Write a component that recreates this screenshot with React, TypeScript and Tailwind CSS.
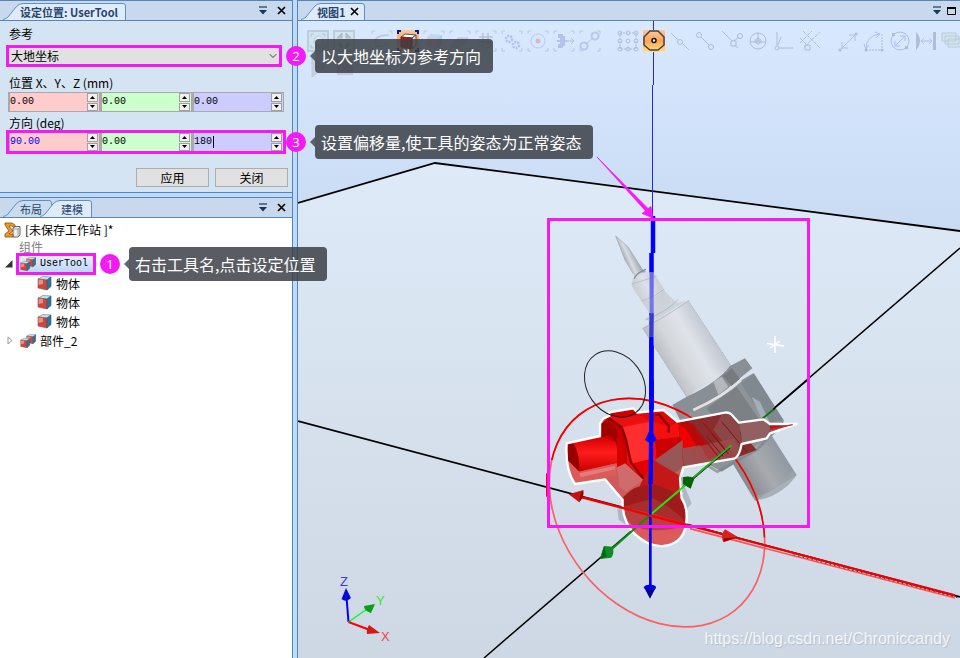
import { useState, type ReactNode } from 'react';
import { ChevronDown } from 'lucide-react';
import clsx from 'clsx';

// ---------------------------------------------------------------------------
// Shared bits: panel header, tabs, callouts
// ---------------------------------------------------------------------------

function Tab({
  width,
  active,
  bold,
  children,
}: {
  width: number;
  active?: boolean;
  bold?: boolean;
  children: ReactNode;
}) {
  return (
    <div className="relative -mr-3 h-[17px]" style={{ width }}>
      <svg className="absolute inset-0 h-full w-full" viewBox={`0 0 ${width} 17`}>
        <path
          d={`M0 16.5 Q3 16 5 14 L13 4 Q16 .5 20 .5 H${width - 3} Q${width - 0.5} .5 ${width - 0.5} 3 V17 H0Z`}
          fill={active ? '#dfebf8' : '#cbdcee'}
        />
        <path
          d={`M0 16.5 Q3 16 5 14 L13 4 Q16 .5 20 .5 H${width - 3} Q${width - 0.5} .5 ${width - 0.5} 3 V17`}
          fill="none"
          stroke="#5f8fc4"
        />
      </svg>
      <button
        type="button"
        className={clsx(
          'relative flex h-full items-center gap-1 pl-[17px] text-[11px] leading-4 whitespace-nowrap text-[#27456f]',
          bold && 'font-bold',
        )}
      >
        {children}
      </button>
    </div>
  );
}

function CloseGlyph() {
  return (
    <svg width="9" height="9" viewBox="0 0 9 9" aria-hidden="true">
      <path d="M1 1l7 7M8 1L1 8" stroke="#000" strokeWidth="1.7" />
    </svg>
  );
}

function MenuGlyph() {
  return (
    <svg width="8" height="9" viewBox="0 0 8 9" aria-hidden="true">
      <path d="M0 1h8" stroke="#1c3557" strokeWidth="1.2" />
      <path d="M0 4h8L4 8.500z" fill="#1c3557" />
    </svg>
  );
}

function PanelHeader({ children, maximize }: { children: ReactNode; maximize?: boolean }) {
  return (
    <header className="flex h-[21px] shrink-0 items-end border-y border-[#5585bb] bg-[#c8d9ed] pl-[3px]">
      {children}
      <div className={clsx('ml-auto flex h-full items-center gap-[10px]', maximize ? 'pr-1' : 'pr-[6px]')}>
        <button type="button" aria-label="菜单">
          <MenuGlyph />
        </button>
        <button type="button" aria-label={maximize ? '最大化' : '关闭面板'}>
          {maximize ? (
            <svg width="9" height="8" viewBox="0 0 9 8" className="-ml-1">
              <path d="M.5 1v6.500h8V1" fill="none" stroke="#000" />
              <path d="M0 1h9" stroke="#000" strokeWidth="2" />
            </svg>
          ) : (
            <CloseGlyph />
          )}
        </button>
      </div>
    </header>
  );
}

// Magenta frame with a numbered badge and a dark hint bubble on its right.
function Callout({ step, text, tight }: { step: number; text: string; tight?: boolean }) {
  return (
    <div className="pointer-events-none absolute -inset-[2px] z-20 border-3 border-[#f41af4]">
      <div
        className={clsx(
          'absolute top-1/2 left-full flex -translate-y-1/2 items-center',
          tight ? 'ml-[3px]' : 'ml-[7px]',
        )}
      >
        <span className="flex size-5 items-center justify-center rounded-full bg-[#f41af4] font-['Open_Sans',sans-serif] text-[13px] leading-5 text-white">
          {step}
        </span>
        <span className="ml-1 border-y-5 border-r-5 border-y-transparent border-r-[#3c424b]/80" />
        <span className="rounded-sm bg-[#3c4046]/85 py-1 pr-3 pl-[6px] font-['Noto_Sans_CJK_SC',sans-serif] text-base leading-[26px] whitespace-nowrap text-white">
          {text}
        </span>
      </div>
    </div>
  );
}

// ---------------------------------------------------------------------------
// Set position form
// ---------------------------------------------------------------------------

const AXIS_BG = ['bg-[#ffcccc]', 'bg-[#ccffcc]', 'bg-[#ccccff]'];
const AXES = ['X', 'Y', 'Z'];

function VectorInput({
  label,
  initial,
  edited,
  children,
}: {
  label: string;
  initial: string[];
  edited?: boolean;
  children?: ReactNode;
}) {
  const [values, setValues] = useState(initial);

  const update = (i: number, v: string) => setValues(values.map((old, j) => (j === i ? v : old)));
  const step = (i: number, d: number) => update(i, ((parseFloat(values[i]) || 0) + d).toFixed(2));

  return (
    <div className="relative mr-1 flex h-5">
      {values.map((value, i) => (
        <div
          key={AXES[i]}
          className={clsx('relative flex min-w-0 flex-1 border border-l-2 border-[#a9a9ad]', AXIS_BG[i])}
        >
          <input
            aria-label={`${label} ${AXES[i]}`}
            value={value}
            onChange={(e) => update(i, e.target.value)}
            className={clsx(
              'w-0 min-w-0 flex-1 bg-transparent font-["Liberation_Mono",monospace] text-[10px] outline-none',
              edited && i === 0 ? 'text-[#0000ff]' : 'text-black',
            )}
          />
          {edited && i === 2 && <span className="absolute top-[3px] left-[19px] h-3 w-px bg-black" />}
          <div className="flex w-3 shrink-0 flex-col gap-px pr-px">
            {[1, -1].map((d) => (
              <button
                key={d}
                type="button"
                aria-label={`${AXES[i]} ${d > 0 ? '+' : '-'}`}
                onClick={() => step(i, d)}
                className="flex flex-1 items-center justify-center border border-[#a0a0a0] bg-[#f0f0f0]"
              >
                <svg width="5" height="3" viewBox="0 0 5 3">
                  <path d={d > 0 ? 'M0 3h5L2.500 0z' : 'M0 0h5L2.500 3z'} />
                </svg>
              </button>
            ))}
          </div>
        </div>
      ))}
      {children}
    </div>
  );
}

function SetPositionPanel() {
  return (
    <section>
      <PanelHeader>
        <Tab width={123} active bold>
          设定位置: UserTool
        </Tab>
      </PanelHeader>
      <form
        className="border-b border-[#5585bb] bg-[#d5e4f2] pt-[5px] pr-1 pb-[5px] pl-2 text-xs leading-4"
        onSubmit={(e) => e.preventDefault()}
      >
        <label htmlFor="reference" className="block pl-px">
          参考
        </label>
        <div className="relative mt-[5px] mr-2 h-[18px]">
          <select id="reference" className="h-full w-full appearance-none bg-[#e1e1e1] pl-[3px] text-xs outline-none">
            <option>大地坐标</option>
            <option>本地</option>
          </select>
          <ChevronDown className="pointer-events-none absolute top-[3px] right-px size-3 text-[#444]" strokeWidth={2} />
          <Callout step={2} text="以大地坐标为参考方向" />
        </div>
        <p className="mt-[10px] mb-px pl-px">位置 X、Y、Z (mm)</p>
        <VectorInput label="位置" initial={['0.00', '0.00', '0.00']} />
        <p className="mt-[3px] mb-px pl-px">方向 (deg)</p>
        <VectorInput label="方向" initial={['90.00', '0.00', '180']} edited>
          <Callout step={3} text="设置偏移量,使工具的姿态为正常姿态" tight />
        </VectorInput>
        <div className="mt-4 flex justify-end gap-[6px]">
          <button type="submit" className="h-[19px] w-[73px] border border-[#adadad] bg-[#e1e1e1]">
            应用
          </button>
          <button type="button" className="h-[19px] w-[73px] border border-[#adadad] bg-[#e1e1e1]">
            关闭
          </button>
        </div>
      </form>
    </section>
  );
}

// ---------------------------------------------------------------------------
// Modeling tree
// ---------------------------------------------------------------------------

function Cube() {
  return (
    <>
      <path d="M1 3l5-2.500 8 .5-4 3z" fill="#c4e4f0" stroke="#507f9b" strokeWidth=".6" />
      <path d="M1 3l9 1v10l-9-2z" fill="#d0453c" stroke="#96494a" strokeWidth=".6" />
      <path d="M10 4l4-3v9.500l-4 3.500z" fill="#2f7397" stroke="#295d82" strokeWidth=".6" />
      <path d="M1.500 3.500l4.500.5v4L1.500 9z" fill="#f0b09e" opacity=".7" />
    </>
  );
}

function BodyIcon() {
  return (
    <svg width="15" height="15" viewBox="0 0 15 15" aria-hidden="true">
      <Cube />
    </svg>
  );
}

function ComponentIcon() {
  return (
    <svg width="16" height="14" viewBox="0 0 16 14" aria-hidden="true">
      <g transform="translate(6 0) scale(.7)">
        <Cube />
      </g>
      <g transform="translate(0 4) scale(.7)">
        <Cube />
      </g>
    </svg>
  );
}

function StationIcon() {
  return (
    <svg width="17" height="16" viewBox="0 0 17 16" aria-hidden="true">
      <path d="M9 6l2-1.500h5V13l-2 2H9z" fill="#eee" stroke="#666" />
      <path d="M9 7h5v7M14 7l2-2" fill="none" stroke="#888" strokeWidth=".8" />
      <path d="M1 1h7l3 2v2H9L8 4H5l4 5-4 3h4v3H1v-3l4-3-4-6z" fill="#f19a1c" stroke="#78501c" strokeWidth=".8" />
    </svg>
  );
}

function TreePanel() {
  return (
    <section className="mt-1 flex flex-1 flex-col">
      <PanelHeader>
        <Tab width={49}>布局</Tab>
        <Tab width={52} active>
          <span className="pl-1">建模</span>
        </Tab>
      </PanelHeader>
      <div className="flex-1 bg-white pt-[2px] text-xs">
        <div className="flex h-[19px] items-center gap-1 pl-1">
          <StationIcon />
          <span>[未保存工作站 ]*</span>
        </div>
        <div className="h-4 pl-[19px] leading-4 text-[#808080] underline">组件</div>
        <ul>
          <li>
            <div className="flex h-[18px] items-center pl-[5px]">
              <svg width="8" height="8" viewBox="0 0 8 8">
                <path d="M7.500 0v7.500H0z" fill="#333" />
              </svg>
              <div className="relative ml-[5px] flex h-[18px] w-[76px] items-center gap-1 bg-linear-to-b from-[#e6f0fc] to-[#bcd4f8] pl-[2px]">
                <ComponentIcon />
                <span className="font-['Liberation_Mono',monospace] text-[10px]">UserTool</span>
                <Callout step={1} text="右击工具名,点击设定位置" />
              </div>
            </div>
            <ul className="pt-px">
              {[1, 2, 3].map((n) => (
                <li key={n} className="flex h-[19px] items-center gap-1 pl-[37px]">
                  <BodyIcon />
                  物体
                </li>
              ))}
            </ul>
          </li>
          <li className="flex h-[19px] items-center pl-[7px]">
            <svg width="6" height="9" viewBox="0 0 6 9">
              <path d="M1 1l4 3.500L1 8z" fill="#fff" stroke="#999" />
            </svg>
            <span className="ml-[7px] flex items-center gap-1">
              <ComponentIcon />
              部件_2
            </span>
          </li>
        </ul>
      </div>
    </section>
  );
}

// ---------------------------------------------------------------------------
// Graphics view
// ---------------------------------------------------------------------------

// Corner brackets shared by the selection level icons
const BRACKETS = <path d="M1 4V1h3M18 1h3v3M21 18v3h-3M4 21H1v-3" stroke="#6464cc" />;

const TOOL_GROUPS: { name: string; on?: boolean; art: ReactNode }[][] = [
  [
    {
      name: '查看全部',
      art: (
        <>
          <path d="M1 1h20v20H1z" fill="#c4dccb" stroke="#66876b" strokeWidth="2" />
          <path d="M4 7V4h3M15 4h3v3M18 15v3h-3M7 18H4v-3" stroke="#47634d" />
          <path d="M8 8l2-2h3l2 2v5l-2 2H9l-2-2z" fill="#eef" stroke="#66876b" />
        </>
      ),
    },
    {
      name: '查看中心',
      art: (
        <>
          <path d="M1 1h20v20H1z" fill="#c4dccb" stroke="#66876b" strokeWidth="2" />
          <path d="M9 3v5H4zM13 3v5h5zM9 19v-5H4zM13 19v-5h5z" fill="#2f4a36" stroke="#2f4a36" />
        </>
      ),
    },
  ],
  [
    { name: '选择曲线', art: <>{BRACKETS}<path d="M18 5C10 5 3 7 4 13s10 4 12-1" stroke="#667" strokeWidth="1.500" /><circle cx="6" cy="15" r="2" stroke="#667" /></> },
    {
      name: '选择表面',
      on: true,
      art: (
        <>
          <path d="M1 4V1h3M18 1h3v3M21 18v3h-3M4 21H1v-3" stroke="#111199" strokeWidth="2" />
          <path d="M4 7l4-3 11 1-4 3z" fill="#fff" stroke="#555" />
          <path d="M15 8l4-3v10l-4 4z" fill="#ddd" stroke="#555" />
          <path d="M4 7l11 1v11L4 17z" fill="#b71818" stroke="#722" />
        </>
      ),
    },
    { name: '选择物体', art: <>{BRACKETS}<path d="M4 7l4-3 11 1-4 3z" fill="#7ac" /><path d="M4 7l11 1v10L4 17z" fill="#d77" /><path d="M15 8l4-3v10l-4 3z" fill="#48a" /></> },
    { name: '选择部件', art: <>{BRACKETS}<path d="M3 14l6-6h10l-3 6-6 4H4z" fill="#999" stroke="#667" /></> },
    { name: '选择组', art: <>{BRACKETS}<path d="M4 7h14M4 12h14M8 3v13M13 3v13M5 15q7 6 12 0" stroke="#556" strokeWidth="1.500" /></> },
    {
      name: '选择机械装置',
      art: (
        <>
          {BRACKETS}
          <circle cx="8" cy="9" r="3" stroke="#5358b8" strokeWidth="2.500" strokeDasharray="2 1" />
          <circle cx="15" cy="15" r="3" stroke="#5358b8" strokeWidth="2.500" strokeDasharray="2 1" />
        </>
      ),
    },
    { name: '选择目标点', art: <>{BRACKETS}<circle cx="11" cy="11" r="7" stroke="#66c" /><circle cx="11" cy="11" r="2.500" fill="#d33" /></> },
    { name: '选择移动指令', art: <>{BRACKETS}<path d="M5 4h5v2h2v4h2v2h-2v4h-2v2H5v-4h2v-2H4v-2h3V8H5z" fill="#5358b8" /><path d="M13 11h8M18 8l3 3-3 3" stroke="#556" /></> },
    { name: '选择路径', art: <>{BRACKETS}<circle cx="5" cy="16" r="3.500" stroke="#557bb5" strokeWidth="2" /><circle cx="16" cy="6" r="3.500" stroke="#557bb5" strokeWidth="2" /><path d="M7 14l7-6" stroke="#667" /></> },
  ],
  [
    {
      name: '捕捉对象',
      art: (
        <>
          <rect x="3" y="3" width="16" height="16" stroke="#445" strokeDasharray="2 1" />
          {[3, 11, 19].map((x) => [3, 11, 19].map((y) => <circle key={`${x}-${y}`} cx={x} cy={y} r="2" stroke="#445" />))}
        </>
      ),
    },
    {
      name: '捕捉中心',
      on: true,
      art: (
        <>
          <path d="M7 1h8l6 6v8l-6 5H7l-6-5V7z" stroke="#4a4238" strokeWidth="1.500" />
          <circle cx="11" cy="10.500" r="2" fill="#fff" stroke="#111" strokeWidth="1.500" />
        </>
      ),
    },
    { name: '捕捉中点', art: <><path d="M2 3l7 7M13 13l7 7" stroke="#445" /><circle cx="11" cy="12" r="2.500" stroke="#445" /></> },
    { name: '捕捉末端', art: <><path d="M6 7l8 8" stroke="#445" /><circle cx="4" cy="5" r="2.500" stroke="#445" /><circle cx="16" cy="17" r="2.500" stroke="#445" /></> },
    { name: '捕捉边缘', art: <><path d="M1 1l10 10M13 11l5-4M13 15l4 3" stroke="#445" /><path d="M10 11h5v5h-5z" stroke="#445" /><circle cx="19" cy="6" r="2.500" stroke="#445" /></> },
    { name: '捕捉重心', art: <><circle cx="11" cy="11" r="8" stroke="#445" /><path d="M3 12h16M11 3v9M8 13v-3l3-2 3 2v3" stroke="#445" /><circle cx="11" cy="12" r="2" stroke="#445" /></> },
    { name: '捕捉本地原点', art: <><path d="M4 2v14M6 18h14M8 7l-3 8" stroke="#445" /><circle cx="4" cy="18" r="2" stroke="#445" /></> },
    { name: '捕捉网格', art: <><path d="M1 13L13 1M5 17L21 2M4 1l17 17M1 8l8 8" stroke="#445" strokeDasharray="4 1" /><path d="M6 15h5v5H6z" stroke="#445" /></> },
  ],
  [
    { name: '点到点', art: <><path d="M4 19L19 4M12 5h6v6M5 12v6h6" stroke="#4444dd" /><circle cx="3" cy="20" r="1.500" fill="#445" /><circle cx="19" cy="4" r="1.500" fill="#445" /></> },
    { name: '角度', art: <><path d="M3 19q0-13 13-15M1 14l2 5 3-4M12 2l5 2-4 4" stroke="#4444dd" /><path d="M3 20h16V4" stroke="#445" strokeDasharray="2 1" /><circle cx="3" cy="20" r="1.500" fill="#445" /><circle cx="19" cy="20" r="1.500" fill="#445" /></> },
    { name: '直径', art: <><circle cx="11" cy="11" r="9" stroke="#445" /><path d="M6 16L16 6M11 6h5v5M6 11v5h5" stroke="#4444dd" /><path d="M3 3h3v3H3zM16 16h3v3h-3z" fill="#445" /></> },
    { name: '最短距离', art: <><path d="M1 2q4 4 4 9t-4 9z" fill="#445" /><path d="M18 2h3v18h-3z" fill="#445" /><path d="M6 11h11M9 8l-3 3 3 3M14 8l3 3-3 3" stroke="#4444dd" /></> },
    { name: '保持测量', art: <path d="M1 3h14v8H1zM4 6h14v8H4zM7 9h14v8H7z" fill="#c9dfc9" stroke="#587858" /> },
  ],
];

function ViewToolbar() {
  return (
    <div className="relative flex gap-4 overflow-hidden pt-[9px] pl-[9px]">
      {TOOL_GROUPS.map((group, g) => (
        <div key={g} className="flex shrink-0 gap-1">
          {group.map((tool) => (
            <button
              key={tool.name}
              type="button"
              aria-label={tool.name}
              className={clsx(
                'size-[22px]',
                tool.on ? 'bg-linear-to-b from-[#f8c8a0] via-[#fba550] to-[#fde090]' : 'opacity-25',
              )}
            >
              <svg width="22" height="22" viewBox="0 0 22 22" fill="none">
                {tool.art}
              </svg>
            </button>
          ))}
        </div>
      ))}
    </div>
  );
}

const RED_OUTLINE =
  'M80 190L180 168V130L190 115L208 108V97L280 85L292 98L370 90L412 125L555 98Q568 96 575 104L597 128L670 118L690 132L770 132L690 160L680 175L605 192Q598 228 585 235L430 262L420 295L425 355Q440 375 440 410Q440 490 370 498Q325 502 280 458Q245 418 248 360L195 298L105 312Q75 270 80 190Z';

function Scene() {
  return (
    <svg
      className="absolute inset-0 h-full w-full"
      viewBox="298 21 662 637"
      preserveAspectRatio="xMinYMin slice"
      aria-hidden="true"
    >
      <defs>
        <linearGradient id="sky" x1="0" y1="0" x2="0" y2="1">
          <stop offset="0" stopColor="#d8e8ff" />
          <stop offset="1" stopColor="#c8dbf3" />
        </linearGradient>
        <linearGradient id="floor" gradientUnits="userSpaceOnUse" x1="0" y1="163" x2="0" y2="658">
          <stop offset="0" stopColor="#dfeaf8" />
          <stop offset="1" stopColor="#ced8e4" />
        </linearGradient>
        <linearGradient id="needle" gradientUnits="userSpaceOnUse" x1="252" y1="150" x2="285" y2="135">
          <stop offset="0" stopColor="#9fa7b0" />
          <stop offset=".45" stopColor="#d9dde2" />
          <stop offset="1" stopColor="#a3abb4" />
        </linearGradient>
        <linearGradient id="barrel" gradientUnits="userSpaceOnUse" x1="340" y1="430" x2="510" y2="330">
          <stop offset="0" stopColor="#b3b7bd" />
          <stop offset=".3" stopColor="#d3d6da" />
          <stop offset=".6" stopColor="#e0e3e9" />
          <stop offset="1" stopColor="#b6bdc7" />
        </linearGradient>
        <linearGradient id="neck" gradientUnits="userSpaceOnUse" x1="280" y1="260" x2="370" y2="215">
          <stop offset="0" stopColor="#bfc4cb" />
          <stop offset=".5" stopColor="#dde0e5" />
          <stop offset="1" stopColor="#c0c7d0" />
        </linearGradient>
        <linearGradient id="base" gradientUnits="userSpaceOnUse" x1="600" y1="310" x2="730" y2="230">
          <stop offset="0" stopColor="#7f848a" />
          <stop offset=".55" stopColor="#a7abb0" />
          <stop offset="1" stopColor="#9299a2" />
        </linearGradient>
        <linearGradient id="redShaft" x1="0" y1="0" x2="0" y2="1">
          <stop offset="0" stopColor="#d80000" />
          <stop offset=".45" stopColor="#ff1c1c" />
          <stop offset="1" stopColor="#c80000" />
        </linearGradient>
        <clipPath id="upperArc">
          <path d="M-40 0V240H200L720 495V0Z" />
        </clipPath>
      </defs>

      <rect x="298" y="21" width="662" height="215" fill="url(#sky)" />
      <path d="M298 203L435 163L960 231V658H298Z" fill="url(#floor)" />
      <g fill="none" stroke="#000" strokeWidth="1.800">
        <path d="M298 203L435 163L960 231" />
        <path d="M298 421L960 597" />
        <path d="M484 658L960 248" strokeWidth="1.500" />
      </g>
      <path d="M653.500 21V85M652.500 85V218" stroke="#2a2ad0" strokeWidth="1" />

      {/* World Z axis, seen through the tool */}
      <path d="M653 216V253" stroke="#0000ff" strokeWidth="4.500" />
      <path d="M651.500 253V420" stroke="#0000ff" strokeWidth="4.500" />

      {/* Tool in its original pose, upper half */}
      <g transform="translate(540 210) scale(.33333)">
        <path d="M227 78L265 112L305 175L318 185L285 205L280 190L255 150Z" fill="url(#needle)" />
        <path d="M227 78L265 112L305 175M227 78L255 150L280 192" fill="none" stroke="#9ca4ad" strokeWidth="2" />
        <path d="M278 208L300 188L340 186L372 238L392 278L330 312L305 275L275 228Z" fill="url(#neck)" opacity=".86" />
        <path d="M275 222Q310 212 350 198M305 274Q340 262 370 240" fill="none" stroke="#a9b0b9" strokeWidth="2" />
        <path d="M282 206Q290 188 318 178" fill="none" stroke="#828b95" strokeWidth="4" />
        <path d="M312 276L375 244L410 278L440 272L330 340L318 325L332 312Z" fill="#cbd0d6" opacity=".86" />
        <path d="M308 355L330 340L445 272L575 470L440 562Z" fill="url(#barrel)" opacity=".95" />
        <path d="M316 330Q380 305 415 268M309 355Q370 325 445 272" fill="none" stroke="#a5adb7" strokeWidth="2" />
        <path d="M445 272L575 470M308 355L440 560" fill="none" stroke="#a0a7b0" strokeWidth="2" strokeDasharray="5 3" />
        <path d="M397 585L440 560Q530 520 570 468L615 445L637 475L590 512Q540 560 460 600L420 630Z" fill="#858a8f" opacity=".95" />
        <path d="M520 515L545 500L565 530L535 555Z" fill="#b5b8bc" />
        <path d="M575 475L600 507L575 528L548 497Z" fill="#777b80" />
        <path d="M420 630L460 597Q550 560 600 513L640 490L732 632L725 650L640 725L545 785L500 760Z" fill="#898e93" opacity=".94" />
        <path d="M500 595L590 530L665 640L590 700Z" fill="#7c8186" />
        <path d="M603 520L680 640L730 630L642 490Z" fill="#808890" />
        <path d="M635 560L660 575L690 640L670 640Z" fill="#a5aeb8" />
        <path d="M460 600Q550 560 603 510" fill="none" stroke="#e0e3e6" strokeWidth="8" />
        <path d="M335 186V310" stroke="#2222f0" strokeWidth="12" opacity=".5" />
        <path d="M335 310L334 380" stroke="#2626cc" strokeWidth="13" opacity=".85" />
        <path d="M334 380V600" stroke="#0000ff" strokeWidth="13" />
      </g>

      <g transform="translate(540 380) scale(.33333)">
        <path d="M575 245L645 362L770 285L696 168Z" fill="url(#base)" />
        <path d="M645 362Q725 350 770 285L758 272Q710 335 638 350Z" fill="#9ba2aa" opacity=".8" />
        <path d="M500 255L532 275L650 210L730 128" fill="none" stroke="#7c848b" strokeWidth="8" opacity=".7" />
        <path d="M232 388L430 310L455 370L410 425L300 460L236 420Z" fill="#87939f" opacity=".5" />

        {/* Rotation circle: pale below the floor, bright above it */}
        <ellipse
          cx="351"
          cy="398"
          rx="375"
          ry="285"
          transform="rotate(51.400 351 398)"
          fill="none"
          stroke="#fa6060"
          strokeWidth="5"
        />
        <g clipPath="url(#upperArc)">
          <ellipse
            cx="351"
            cy="398"
            rx="375"
            ry="285"
            transform="rotate(51.400 351 398)"
            fill="none"
            stroke="#ee0000"
            strokeWidth="5"
          />
        </g>
        <path d="M20 280V350" stroke="#f00" strokeWidth="4" />
        <path d="M665 118L705 85" stroke="#087a08" strokeWidth="6" />
        <path d="M700 88L800 2" stroke="#000" strokeWidth="4" />

        {/* Tool in its new pose */}
        <path d={RED_OUTLINE} fill="#cf5252" opacity=".95" />
        <path d="M412 126L430 262L585 235L605 192L680 175L690 160L765 132L690 132L670 118L597 128L572 100Z" fill="#8c5c5c" />
        <path d="M412 126L555 100L650 210L585 235L480 222Z" fill="#8a2c2c" />
        <path d="M572 102L598 130L604 192L588 232L520 150L545 104Z" fill="#8c4646" />
        <path d="M412 126L445 122L530 230L430 260Z" fill="#b80808" />
        <path d="M412 128L440 150L480 215L430 225Z" fill="#f00000" />
        <path d="M428 205L480 196L510 246L430 261Z" fill="#985050" />
        <path d="M450 205L580 175L600 215L585 235L460 252Z" fill="#a04c4c" opacity=".75" />
        <path d="M600 130L668 121L686 138L682 172L606 190Z" fill="#916060" />
        <path d="M690 135L765 133L690 150Z" fill="#c31111" />
        <path d="M455 130L540 236M490 128L560 215" stroke="#a01414" strokeWidth="4" />
        <path d="M500 170L550 230M515 160L565 222" stroke="#7e1313" strokeWidth="3" />
        <path d="M545 125L620 215" stroke="#701818" strokeWidth="3" />

        <path d="M184 132L208 110L280 88L292 100L370 93L412 128L428 255L355 235L330 295L305 302L245 280L184 175Z" fill="#f41010" />
        <path d="M345 180L420 170L428 195L350 240Z" fill="#cc0000" />
        <path d="M428 180V260L390 290L345 240Z" fill="#985656" />
        <path d="M184 132L205 110L240 135L258 175L262 250L310 300L290 302L232 245V188L184 172Z" fill="#c40000" />
        <path d="M184 132L205 118L232 150L236 200L210 165L184 170Z" fill="#a20000" />
        <path d="M247 142L330 125L333 238L280 252L262 200Z" fill="#ff2e2e" />
        <path d="M278 250L333 236V288L318 298Z" fill="#e40000" />
        <path d="M208 98L280 88L292 101L325 118L245 138L208 110Z" fill="#e81010" />
        <path d="M208 98L280 88L292 104Q250 118 212 106Z" fill="#cc0000" />
        <path d="M292 101L370 93L410 128L390 140L325 120Z" fill="#e00808" />
        <path d="M345 104L358 104L386 138V158" fill="none" stroke="#960000" strokeWidth="7" />
        <path d="M206 114L245 142L258 178L272 246L312 298" fill="none" stroke="#8c0000" strokeWidth="7" />
        <path d="M82 190L180 172L232 188V250L115 275L82 240Z" fill="url(#redShaft)" />
        <path d="M82 190L98 189Q118 210 118 275L82 240Z" fill="#960000" />
        <path d="M82 240L118 275L230 250L228 288L105 310Q82 280 82 240Z" fill="#dd5a5a" />
        <path d="M118 280L225 258V268L122 292Z" fill="#e88a8a" opacity=".7" />
        <path d="M230 172L252 195L256 260L232 262Z" fill="#d40000" />
        <path d="M232 262L256 250L310 300L258 335L238 320Z" fill="#cf6b6b" />
        <path d="M186 165Q225 155 232 200" fill="none" stroke="#900000" strokeWidth="3" strokeDasharray="4 3" />

        <path d="M340 240L425 290L422 355L438 400V430L350 405L300 315Z" fill="#c41818" />
        <path d="M250 350Q290 310 340 314Q420 330 436 390V425Q330 400 250 380Z" fill="#9f1b1b" />
        <path d="M250 380Q330 400 436 430Q425 400 340 355Z" fill="#ad3434" opacity=".7" />
        <path d="M252 388Q330 400 432 432Q430 448 335 452Q262 450 252 388Z" fill="#b84040" />
        <path d="M262 430Q335 468 435 440Q420 495 365 497Q310 500 262 430Z" fill="#dc5a5a" />
        <path d={RED_OUTLINE} fill="none" stroke="#fff" strokeWidth="7" strokeLinejoin="round" />
        <path d="M690 148L758 134" stroke="#c22" strokeWidth="4" />

        <ellipse cx="225" cy="12" rx="106" ry="84" transform="rotate(55.500 225 12)" fill="none" stroke="#222" strokeWidth="3" />

        {/* X axis */}
        <path d="M100 345L1245 646" stroke="#f00000" strokeWidth="7" />
        <path d="M450 446L1245 654" stroke="#ff5050" strokeWidth="5" />
        <path d="M760 524L1260 655" stroke="#300000" strokeWidth="2" strokeDasharray="5 9" />
        <path d="M86 343L130 330Q122 348 118 367Z" fill="#c81010" />
        <path d="M130 330Q134 350 118 367Q118 345 130 330Z" fill="#8b0000" />
        <path d="M595 472L555 448Q540 465 550 486Z" fill="#d82020" />
        <path d="M595 472L552 475L550 486Z" fill="#a00000" />

        {/* Y axis */}
        <path d="M203 518L330 405" stroke="#0a8f0a" strokeWidth="6" />
        <path d="M330 405L445 308" stroke="#18e818" strokeWidth="6" />
        <path d="M460 293L575 195" stroke="#18c018" strokeWidth="5" />
        <path d="M462 296L570 204" stroke="#0a200a" strokeWidth="2.500" />
        <path d="M463 296Q450 286 428 292V312L452 326Z" fill="#046404" />
        <path d="M180 537L192 498L218 500Q224 520 214 533Z" fill="#118c22" />
        <path d="M180 537L192 498L200 530Z" fill="#046c10" />

        {/* Z axis */}
        <path d="M335 0L332 312" stroke="#0000ff" strokeWidth="13" />
        <path d="M331 312V620" stroke="#0000ff" strokeWidth="8" />
        <path d="M332 143L315 180Q332 195 350 180Z" fill="#0505ee" />
        <path d="M312 622Q330 605 348 622L330 656Z" fill="#000090" />
        <ellipse cx="330" cy="622" rx="18" ry="8" fill="#0000e6" />
        <path d="M326 406L436 434" stroke="#f00" strokeWidth="7" />
      </g>

      <path d="M775 336V353M767 343.500L784 346M770 348L780 341" stroke="#fff" strokeWidth="1.500" />

      {/* Orientation triad */}
      <path d="M348.500 622L346.500 597" stroke="#0000ff" strokeWidth="2" />
      <path d="M346 588L351 598Q346 603 341.500 599Z" fill="#0808d8" />
      <path d="M348.500 622L367 609" stroke="#00ff20" strokeWidth="1.500" />
      <path d="M375 604L364 606Q364 611 371 613Z" fill="#08a018" />
      <path d="M348.500 622L370 630" stroke="#ff0000" strokeWidth="2" />
      <path d="M380 633L369 625Q366 630 367 634Z" fill="#d41818" />
      <g fontFamily="Liberation Sans, sans-serif" fontSize="13">
        <text x="340" y="586" fill="#3c3ce8">Z</text>
        <text x="376" y="605" fill="#30e830">Y</text>
        <text x="381" y="641" fill="#ee4444">X</text>
      </g>

      {/* Region frame and pointer */}
      <rect x="548.500" y="219.500" width="260" height="307" fill="none" stroke="#f41af4" strokeWidth="3" />
      <path d="M597 157L648 208.500L651 206.500L653 218L642 213.500L645.500 211Z" fill="#f41af4" stroke="#f41af4" strokeWidth=".7" />
    </svg>
  );
}

function GraphicsView() {
  return (
    <main className="flex min-w-0 flex-1 flex-col border-l border-[#5585bb]">
      <PanelHeader maximize>
        <Tab width={64} active bold>
          <span className="-ml-px">视图1</span>
          <CloseGlyph />
        </Tab>
      </PanelHeader>
      <div className="relative flex flex-1 flex-col overflow-hidden">
        <Scene />
        <ViewToolbar />
        <div className="relative mt-1 flex gap-[10px] pl-[13px] opacity-25">
          <button type="button" aria-label="播放">
            <svg width="16" height="22" viewBox="0 0 16 22">
              <path d="M1 1l13 10L1 21z" fill="#999" stroke="#777" />
            </svg>
          </button>
          <button type="button" aria-label="停止" className="size-4 self-center bg-[#888]" />
        </div>
        <p className="relative mt-auto pr-[10px] pb-2 text-right font-['Liberation_Sans',sans-serif] text-base leading-[22px] text-white/80 text-shadow-[1px_1px_1px_#9aa4b080]">
          https://blog.csdn.net/Chroniccandy
        </p>
      </div>
    </main>
  );
}

export default function App() {
  return (
    <div className="flex min-h-screen gap-1 bg-[#bddaff] font-['Noto_Sans_CJK_SC',sans-serif] text-black">
      <aside className="flex w-[293px] shrink-0 flex-col border-r border-[#5585bb]">
        <SetPositionPanel />
        <TreePanel />
      </aside>
      <GraphicsView />
    </div>
  );
}
